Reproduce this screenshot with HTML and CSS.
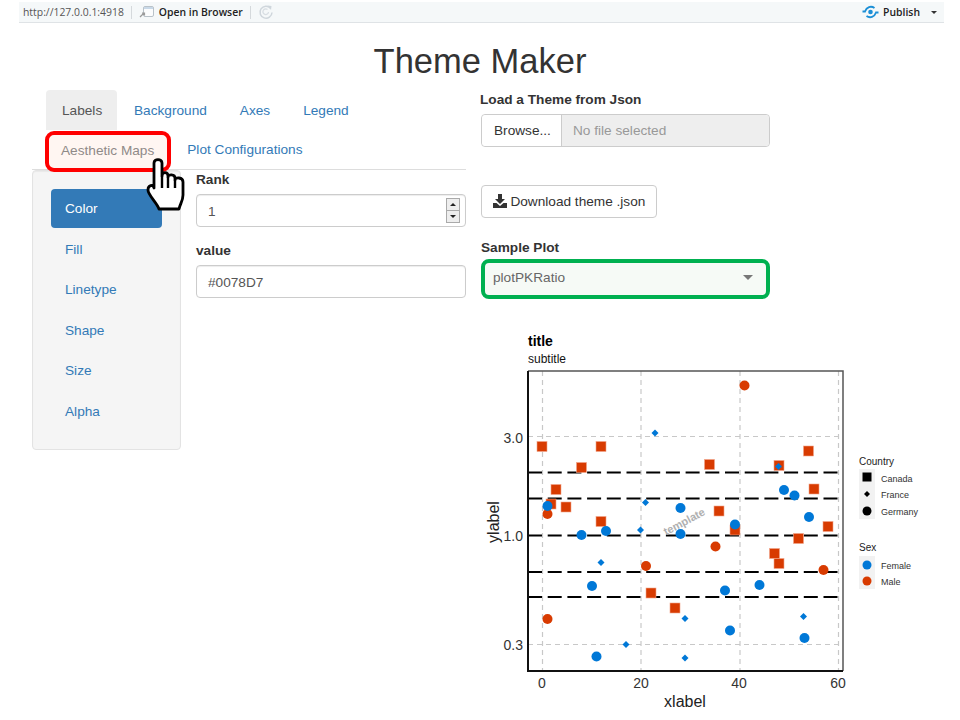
FILE: index.html
```html
<!DOCTYPE html>
<html lang="en">
<head>
    <meta charset="UTF-8">
    <title>Theme Maker</title>
    <link rel="stylesheet" href="styles.css">
</head>
<body>
    <div class="toolbar">
        <span class="url">http://127.0.0.1:4918</span>
        <span class="sep"></span>
        <svg class="browser-icon" width="16" height="14" viewBox="0 0 16 14">
            <rect x="4.500" y="1.500" width="10" height="10" rx="1.500" fill="#fbfcfd" stroke="#b9c2c9"/>
            <path d="M5 2h9v2H5z" fill="#c9d9e8"/>
            <path d="M1 12l4-4M3 8h2.500v2.500" fill="none" stroke="#9a9a9a" stroke-width="1.200"/>
        </svg>
        <span class="open">Open in Browser</span>
        <span class="sep"></span>
        <svg class="reload-icon" width="16" height="16" viewBox="0 0 16 16">
            <path d="M12.500 4.200A6 6 0 1 0 14 8.500" fill="none" stroke="#cfd6dc" stroke-width="1.500"/>
            <path d="M10.500 8a2.800 2.800 0 1 1-1-2.400" fill="none" stroke="#d8dee3" stroke-width="1.300"/>
            <path d="M9.500 1.500l4 .5-.5 4z" fill="#cfd6dc"/>
        </svg>
        <span class="spacer"></span>
        <svg class="publish-icon" width="17" height="14" viewBox="0 0 17 14">
            <path d="M0.500 6.500h2.500C4.500 2 9 .5 12.500 3" fill="none" stroke="#1c8fd6" stroke-width="1.800"/>
            <path d="M16.500 7.500H14C12.500 12 8 13.500 4.500 11" fill="none" stroke="#1c8fd6" stroke-width="1.800"/>
            <circle cx="8.500" cy="7" r="2.300" fill="#1c8fd6"/>
        </svg>
        <span class="publish">Publish</span>
        <span class="mini-caret"></span>
    </div>

    <h1 class="title">Theme Maker</h1>

    <div class="columns">
        <div class="left">
            <ul class="tabs">
                <li class="tab active">Labels</li>
                <li class="tab">Background</li>
                <li class="tab">Axes</li>
                <li class="tab">Legend</li>
                <li class="tab highlighted">Aesthetic Maps</li>
                <li class="tab">Plot Configurations</li>
            </ul>
            <div class="tab-body">
                <div class="well">
                    <a class="pill selected">Color</a>
                    <a class="pill">Fill</a>
                    <a class="pill">Linetype</a>
                    <a class="pill">Shape</a>
                    <a class="pill">Size</a>
                    <a class="pill">Alpha</a>
                </div>
                <div class="fields">
                    <label class="field-label">Rank</label>
                    <div class="input number">
                        1
                        <span class="spinner">
                            <span class="spin up"></span>
                            <span class="spin down"></span>
                        </span>
                    </div>
                    <label class="field-label value-label">value</label>
                    <div class="input">#0078D7</div>
                </div>
            </div>
        </div>

        <div class="right">
            <label class="field-label load-label">Load a Theme from Json</label>
            <div class="file-input">
                <span class="browse">Browse...</span>
                <span class="file-name">No file selected</span>
            </div>
            <button class="download">
                <svg width="14" height="14" viewBox="0 0 14 14">
                    <path d="M5 0h4v5h3L7 10 2 5h3z" fill="#333"/>
                    <path d="M0 9h3.500L7 12l3.500-3H14v5H0z" fill="#333"/>
                </svg>
                Download theme .json
            </button>
            <label class="field-label sample-label">Sample Plot</label>
            <div class="select">plotPKRatio<span class="caret"></span></div>

            <svg class="plot" width="480" height="392" viewBox="480 328 480 392">
                <defs>
                    <rect id="sq" x="-5" y="-5" width="10" height="10" fill="#d83b01" stroke="#f2a58a" stroke-width="0.600"/>
                    <circle id="rc" r="5" fill="#d83b01"/>
                    <circle id="bc" r="5" fill="#0078d7"/>
                    <path id="bd" d="M0-3.500L3.500 0 0 3.500-3.500 0z" fill="#0078d7"/>
                </defs>

                <text class="plot-title" x="528" y="346">title</text>
                <text class="plot-sub" x="528" y="363">subtitle</text>

                <g class="grid">
                    <path d="M542.500 371V671M641 371V671M740 371V671M838.500 371V671"/>
                    <path d="M528 436.500H843M528 644.500H843"/>
                </g>

                <g class="hlines">
                    <path d="M528 472.500H843M528 498.500H843M528 535.500H843M528 572H843M528 597H843"/>
                </g>

                <text class="watermark" transform="translate(686 525) rotate(-28)" text-anchor="middle">template</text>

                <g>
                    <use href="#sq" x="542" y="446.500"/>
                    <use href="#sq" x="601" y="446.500"/>
                    <use href="#sq" x="581.500" y="467.500"/>
                    <use href="#sq" x="556" y="489.500"/>
                    <use href="#sq" x="551" y="504"/>
                    <use href="#sq" x="566" y="507"/>
                    <use href="#sq" x="601" y="521.500"/>
                    <use href="#sq" x="651" y="593"/>
                    <use href="#sq" x="675" y="608"/>
                    <use href="#sq" x="709.500" y="464.500"/>
                    <use href="#sq" x="719" y="511"/>
                    <use href="#sq" x="735" y="530"/>
                    <use href="#sq" x="779" y="465.500"/>
                    <use href="#sq" x="808.500" y="451"/>
                    <use href="#sq" x="814" y="489"/>
                    <use href="#sq" x="828" y="526.500"/>
                    <use href="#sq" x="798.500" y="538.500"/>
                    <use href="#sq" x="774.500" y="553.500"/>
                    <use href="#sq" x="779" y="563.500"/>

                    <use href="#rc" x="744.500" y="385.500"/>
                    <use href="#rc" x="547.500" y="514"/>
                    <use href="#rc" x="715.500" y="546.500"/>
                    <use href="#rc" x="646" y="566"/>
                    <use href="#rc" x="547.500" y="619"/>
                    <use href="#rc" x="823.500" y="570"/>

                    <use href="#bc" x="547.500" y="506"/>
                    <use href="#bc" x="680.500" y="508"/>
                    <use href="#bc" x="784" y="490"/>
                    <use href="#bc" x="794.500" y="495.500"/>
                    <use href="#bc" x="809" y="517"/>
                    <use href="#bc" x="735" y="524.500"/>
                    <use href="#bc" x="581.500" y="535"/>
                    <use href="#bc" x="606" y="531"/>
                    <use href="#bc" x="680.500" y="534"/>
                    <use href="#bc" x="592" y="586"/>
                    <use href="#bc" x="759.500" y="585"/>
                    <use href="#bc" x="725" y="590.500"/>
                    <use href="#bc" x="730" y="630.500"/>
                    <use href="#bc" x="804.500" y="638"/>
                    <use href="#bc" x="596.500" y="656.500"/>

                    <use href="#bd" x="655" y="433"/>
                    <use href="#bd" x="645.500" y="502.500"/>
                    <use href="#bd" x="640.500" y="530"/>
                    <use href="#bd" x="778.500" y="466.500"/>
                    <use href="#bd" x="601" y="562.500"/>
                    <use href="#bd" x="685" y="618.500"/>
                    <use href="#bd" x="626" y="644.500"/>
                    <use href="#bd" x="685" y="658"/>
                    <use href="#bd" x="803.500" y="616.500"/>
                </g>

                <path d="M528 371H843V671" fill="none" stroke="#555" stroke-width="1.500"/>
                <path d="M528 371V671H843" fill="none" stroke="#111" stroke-width="2"/>

                <g class="tick-text" text-anchor="end">
                    <text x="523" y="443">3.0</text>
                    <text x="523" y="541">1.0</text>
                    <text x="523" y="650">0.3</text>
                </g>
                <g class="tick-text" text-anchor="middle">
                    <text x="542" y="688">0</text>
                    <text x="641" y="688">20</text>
                    <text x="739" y="688">40</text>
                    <text x="838" y="688">60</text>
                </g>
                <text class="axis-label" x="685" y="707" text-anchor="middle">xlabel</text>
                <text class="axis-label" transform="translate(499 522) rotate(-90)" text-anchor="middle">ylabel</text>

                <text class="legend-title" x="859" y="465">Country</text>
                <rect class="legend-key" x="859" y="469" width="16" height="50"/>
                <rect x="862.500" y="472.500" width="9" height="9" fill="#000"/>
                <path d="M867 491l3 3-3 3-3-3z" fill="#000"/>
                <circle cx="867" cy="511" r="4.500" fill="#000"/>
                <text class="legend-text" x="881" y="482">Canada</text>
                <text class="legend-text" x="881" y="498">France</text>
                <text class="legend-text" x="881" y="515">Germany</text>

                <text class="legend-title" x="859" y="551">Sex</text>
                <rect class="legend-key" x="859" y="556" width="16" height="33"/>
                <circle cx="867" cy="565" r="4.500" fill="#0078d7"/>
                <circle cx="867" cy="581" r="4.500" fill="#d83b01"/>
                <text class="legend-text" x="881" y="569">Female</text>
                <text class="legend-text" x="881" y="585">Male</text>
            </svg>
        </div>
    </div>

    <svg class="hand" width="40" height="56" viewBox="0 0 40 56">
        <path d="M8 6C8 1.500 16 1.500 16 6V19C16 14.500 22 14.500 22 19V20C22 17 29 17 29 21V23C29 20 37 20 37 25V38C37 44 34 47 33 52H13C11 46 2 38 2 33 2 28 7 27 8 31Z" fill="#fff" stroke="#000" stroke-width="2.800" stroke-linejoin="round"/>
        <path d="M16 19V31M22 20V31M29 23V31" fill="none" stroke="#000" stroke-width="2.400"/>
    </svg>
</body>
</html>
```
FILE: styles.css
```css
* {
    box-sizing: border-box;
}
html, body {
    margin: 0;
    height: 720px;
    overflow: hidden;
}
body {
    position: relative;
    font-family: "Liberation Sans", Arial, sans-serif;
    font-size: 13.650px;
    color: #333;
    background: #ffffff;
}
.toolbar {
    display: flex;
    align-items: center;
    height: 21px;
    margin: 2px 16px 0 19px;
    padding: 0 7px 0 4px;
    background: #f5f8f9;
    border-bottom: 1px solid #dfe3e6;
    font-size: 10.400px;
    font-family: "Open Sans", "Liberation Sans", sans-serif;
}
.url {
    color: #555;
}
.sep {
    width: 1px;
    height: 13px;
    margin: 0 7px;
    background: #d5d9dc;
}
.browser-icon {
    margin: 0 4px 0 0;
}
.open {
    color: #222;
    font-weight: 600;
}
.spacer {
    flex: 1;
}
.publish-icon {
    margin-right: 4px;
}
.publish {
    color: #222;
    font-weight: 600;
}
.mini-caret {
    width: 0;
    height: 0;
    margin-left: 11px;
    border: 3px solid transparent;
    border-top-color: #333;
    border-bottom: 0;
}
.title {
    margin: 18px 0 0;
    height: 49px;
    font-size: 34.500px;
    font-weight: 400;
    line-height: 40px;
    text-align: center;
}
.columns {
    display: flex;
}
.left {
    width: 480px;
    padding-left: 32px;
}
.tabs {
    display: flex;
    flex-wrap: wrap;
    width: 434px;
    margin: 0;
    padding: 0 0 0 14px;
    list-style: none;
    border-bottom: 1px solid #ddd;
    height: 80px;
}
.tab {
    height: 40px;
    margin-right: 1px;
    padding: 11px 16px 9px;
    color: #337ab7;
    line-height: 20px;
    border-radius: 4px 4px 0 0;
}
.tab.active {
    width: 71px;
    background: #eee;
    color: #555;
}
.tab.highlighted {
    position: relative;
    height: 41px;
    margin: 1px 0 0 -1px;
    padding: 6px 13px 0 12px;
    color: #8f8a88;
    background: #fff6f2;
    border: 4px solid #ff0000;
    border-radius: 9px;
    line-height: 19px;
}
.tab.highlighted + .tab {
    padding-top: 10px;
}
.tab-body {
    display: flex;
}
.well {
    width: 149px;
    height: 280px;
    padding: 18px;
    background: #f5f5f5;
    border: 1px solid #e3e3e3;
    border-radius: 4px;
    box-shadow: inset 0 1px 1px rgba(0, 0, 0, 0.05);
}
.pill {
    display: block;
    height: 39px;
    margin-bottom: 1.500px;
    padding: 10px 14px 0;
    color: #337ab7;
    line-height: 20px;
    border-radius: 4px;
}
.pill.selected {
    background: #337ab7;
    color: #fff;
}
.fields {
    width: 270px;
    margin-left: 15px;
}
.field-label {
    display: block;
    font-weight: 700;
    line-height: 20px;
}
.value-label {
    margin-top: 14px;
    margin-bottom: 4px;
}
.fields .field-label:first-child {
    height: 24px;
    padding-top: 0;
}
.input {
    position: relative;
    height: 33px;
    padding: 0 11px;
    color: #555;
    line-height: 33px;
    background: #fff;
    border: 1px solid #ccc;
    border-radius: 4px;
    box-shadow: inset 0 1px 1px rgba(0, 0, 0, 0.075);
}
.spinner {
    position: absolute;
    top: 3px;
    right: 5px;
    display: flex;
    flex-direction: column;
    width: 14px;
    height: 25px;
    border: 1px solid #aaa;
    background: #eee;
}
.spin {
    flex: 1;
    display: flex;
    align-items: center;
    justify-content: center;
}
.spin.up {
    border-bottom: 1px solid #aaa;
}
.spin.up::before {
    content: "";
    border: 3px solid transparent;
    border-bottom-color: #222;
    border-top: 0;
}
.spin.down::before {
    content: "";
    border: 3px solid transparent;
    border-top-color: #222;
    border-bottom: 0;
}
.right {
    width: 480px;
}
.load-label {
    height: 24px;
    line-height: 20px;
}
.file-input {
    display: flex;
    width: 289px;
    height: 33px;
    margin-left: 1px;
    line-height: 31px;
    border: 1px solid #ccc;
    border-radius: 4px;
}
.browse {
    width: 80px;
    padding-left: 12px;
    background: #fff;
    border-right: 1px solid #ccc;
    border-radius: 4px 0 0 4px;
}
.file-name {
    flex: 1;
    padding-left: 11px;
    color: #999;
    background: #eee;
    border-radius: 0 4px 4px 0;
}
.download {
    display: block;
    width: 176px;
    height: 33px;
    margin: 38px 0 0 1px;
    padding: 0;
    color: #333;
    font: 13.650px "Liberation Sans", Arial, sans-serif;
    background: #fff;
    border: 1px solid #ccc;
    border-radius: 4px;
}
.download svg {
    vertical-align: -2px;
}
.sample-label {
    height: 20px;
    margin: 20px 0 1px 1px;
}
.select {
    position: relative;
    width: 289px;
    height: 39.500px;
    margin-left: 1px;
    padding-left: 8px;
    color: #666;
    line-height: 30px;
    background: #f6faf6;
    border: 4px solid #00b050;
    border-radius: 8px;
}
.caret {
    position: absolute;
    top: 12px;
    right: 13px;
    border: 5px solid transparent;
    border-top-color: #777;
    border-bottom: 0;
}
.plot {
    display: block;
    margin-top: 29.500px;
}
.grid path {
    fill: none;
    stroke: #c8c8c8;
    stroke-width: 1.200;
    stroke-dasharray: 5 4;
}
.hlines path {
    fill: none;
    stroke: #000;
    stroke-width: 2;
    stroke-dasharray: 14 5.700;
}
.plot-title {
    font-size: 14px;
    font-weight: 700;
    fill: #000;
}
.plot-sub {
    font-size: 12px;
    fill: #111;
}
.tick-text {
    font-size: 14px;
    fill: #333;
}
.axis-label {
    font-size: 16px;
    fill: #222;
}
.legend-title {
    font-size: 10px;
    fill: #222;
}
.legend-text {
    font-size: 9px;
    fill: #333;
}
.legend-key {
    fill: #f2f2f2;
}
.watermark {
    font-size: 11px;
    font-weight: 700;
    fill: #b0b0b0;
}
.hand {
    position: absolute;
    left: 146px;
    top: 157px;
}
```
